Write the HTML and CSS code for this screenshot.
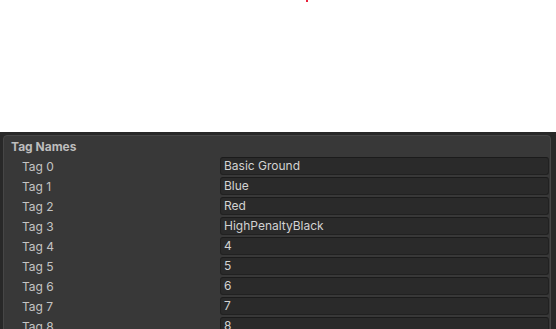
FILE: index.html
```html
<!DOCTYPE html>
<html>
<head>
<meta charset="utf-8">
<link rel="stylesheet" href="styles.css">
</head>
<body>
<div class="scene"><span class="pivot"></span></div>
<div class="inspector">
  <div class="panel">
    <div class="header">Tag Names</div>
    <div class="rows">
      <div class="row"><span class="label">Tag 0</span><div class="field">Basic Ground</div></div>
      <div class="row"><span class="label">Tag 1</span><div class="field">Blue</div></div>
      <div class="row"><span class="label">Tag 2</span><div class="field">Red</div></div>
      <div class="row"><span class="label">Tag 3</span><div class="field">HighPenaltyBlack</div></div>
      <div class="row"><span class="label">Tag 4</span><div class="field">4</div></div>
      <div class="row"><span class="label">Tag 5</span><div class="field">5</div></div>
      <div class="row"><span class="label">Tag 6</span><div class="field">6</div></div>
      <div class="row"><span class="label">Tag 7</span><div class="field">7</div></div>
      <div class="row"><span class="label">Tag 8</span><div class="field">8</div></div>
    </div>
  </div>
</div>
</body>
</html>
```
FILE: styles.css
```css
html, body {
  margin: 0;
  padding: 0;
  width: 556px;
  height: 329px;
  overflow: hidden;
  background: #ffffff;
  font-family: Inter, "Noto Sans", sans-serif;
  font-size: 12px;
}
.scene {
  height: 132px;
  position: relative;
}
.pivot {
  position: absolute;
  left: 306px;
  top: 0;
  width: 2px;
  height: 2px;
  background: #e8203a;
}
.inspector {
  background: #282828;
  height: 197px;
  padding: 3px 5px 0 3px;
  box-sizing: border-box;
}
.panel {
  background: #383838;
  border: 1px solid #464646;
  border-radius: 4px;
  height: 220px;
  box-sizing: border-box;
}
.header {
  height: 21px;
  line-height: 22px;
  padding-left: 7px;
  font-weight: 700;
  color: #bdbdbd;
}
.rows {
  display: flex;
  flex-direction: column;
  gap: 2px;
}
.row {
  display: flex;
  align-items: center;
  height: 18px;
  padding-right: 1px;
}
.label {
  width: 216px;
  padding-left: 18px;
  box-sizing: border-box;
  color: #c4c4c4;
  flex: none;
}
.field {
  flex: 1;
  height: 18px;
  box-sizing: border-box;
  background: #2a2a2a;
  border: 1px solid #212121;
  border-top-color: #1b1b1b;
  border-radius: 3px;
  color: #d2d2d2;
  padding-left: 3px;
  line-height: 16px;
}
```
